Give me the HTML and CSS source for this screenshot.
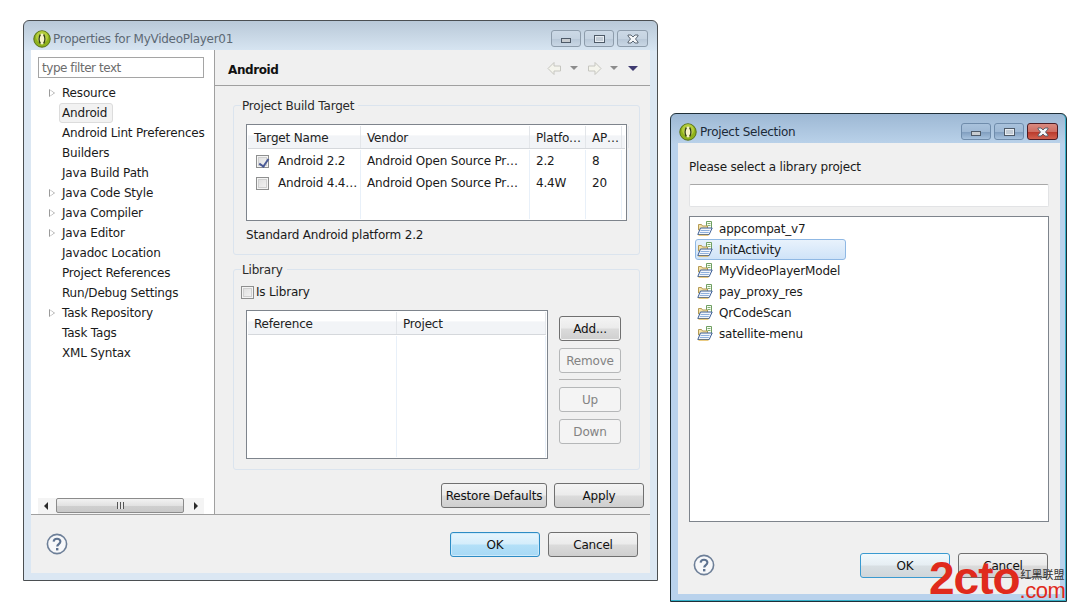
FILE: index.html
```html
<!DOCTYPE html>
<html lang="en">
<head>
<meta charset="utf-8">
<title>Properties and Project Selection</title>
<link rel="stylesheet" href="styles.css">
</head>
<body>
<svg class="defs" width="0" height="0" aria-hidden="true">
  <defs>
    <symbol id="logo" viewBox="0 0 18 18">
      <circle cx="9" cy="9" r="8.2" fill="#8fb21c" stroke="#566f14" stroke-width="1"/>
      <circle cx="9" cy="7" r="6" fill="#c3d94a" opacity=".7"/>
      <ellipse cx="9" cy="9" rx="3.6" ry="5.4" fill="#f7f4c8"/>
      <path d="M7.400 4.500C5.600 7 5.600 11 7.400 13.500M10.600 4.500C12.400 7 12.400 11 10.600 13.500" fill="none" stroke="#2f3d10" stroke-width="1.300"/>
    </symbol>
    <symbol id="help" viewBox="0 0 22 22">
      <circle cx="11" cy="11" r="9.600" fill="#f7f8fa" stroke="#6d7f98" stroke-width="1.600"/>
      <path d="M7.600 8.600C7.800 6.600 9.200 5.700 11 5.700c2 0 3.400 1.100 3.400 2.800 0 2.500-3.200 2.600-3.200 5" fill="none" stroke="#5d7290" stroke-width="2.100"/>
      <rect x="10" y="15" width="2.400" height="2.400" fill="#5d7290"/>
    </symbol>
    <symbol id="folder" viewBox="0 0 16 15">
      <path d="M9.500.5h5v7h-5z" fill="#fbfdf6" stroke="#6f9f62"/>
      <path d="M10.500 2.500h3M10.500 4.500h3" stroke="#7fb06f"/>
      <path d="M1.500 3.500h3l1 1.500h5v4h-9z" fill="#f6e3a6" stroke="#b49a55"/>
      <path d="M.8 13.500l2.700-6.500h11.700l-3 6.500z" fill="#f3f6fb" stroke="#3e5f96"/>
      <path d="M3.500 9.500h9M2.800 11.500h9" stroke="#8fb0dc"/>
      <path d="M1.500 14.200h10" stroke="#e2b64c"/>
    </symbol>
    <symbol id="nav-left" viewBox="0 0 15 15">
      <path d="M7 1.500 1 7.500l6 6v-3.500h6.500v-5H7z" fill="#f4f4ec" stroke="#c6c6c0"/>
    </symbol>
    <symbol id="nav-right" viewBox="0 0 15 15">
      <path d="M8 1.500l6 6-6 6v-3.500H1.500v-5H8z" fill="#f4f4ec" stroke="#c6c6c0"/>
    </symbol>
    <symbol id="close-x" viewBox="0 0 14 10">
      <path d="M2 1h3l2 2 2-2h3v1L9.500 5 12 8v1H9L7 7 5 9H2V8l2.500-3L2 2z" fill="#f4f6f8" stroke="#4e5a68" stroke-width=".9"/>
    </symbol>
  </defs>
</svg>

<section class="window win-properties">
  <header class="titlebar">
    <svg class="title-icon"><use href="#logo"/></svg>
    <span class="title-text">Properties for MyVideoPlayer01</span>
    <div class="caption-buttons">
      <span class="cap"><i class="cap-min"></i></span>
      <span class="cap"><i class="cap-max"></i></span>
      <span class="cap"><svg class="cap-x"><use href="#close-x"/></svg></span>
    </div>
  </header>
  <div class="client">
    <div class="main">
      <aside class="sidebar">
        <div class="filter">type filter text</div>
        <ul class="tree">
          <li class="node"><i class="twisty"></i><span>Resource</span></li>
          <li class="node is-current"><span>Android</span></li>
          <li class="node"><span>Android Lint Preferences</span></li>
          <li class="node"><span>Builders</span></li>
          <li class="node"><span>Java Build Path</span></li>
          <li class="node"><i class="twisty"></i><span>Java Code Style</span></li>
          <li class="node"><i class="twisty"></i><span>Java Compiler</span></li>
          <li class="node"><i class="twisty"></i><span>Java Editor</span></li>
          <li class="node"><span>Javadoc Location</span></li>
          <li class="node"><span>Project References</span></li>
          <li class="node"><span>Run/Debug Settings</span></li>
          <li class="node"><i class="twisty"></i><span>Task Repository</span></li>
          <li class="node"><span>Task Tags</span></li>
          <li class="node"><span>XML Syntax</span></li>
        </ul>
        <div class="hscroll">
          <i class="arrow-left"></i>
          <div class="thumb"><b></b></div>
          <i class="arrow-right"></i>
        </div>
      </aside>
      <div class="pane">
        <div class="pane-head">
          <h1>Android</h1>
          <div class="nav-tools">
            <svg class="nav-icon"><use href="#nav-left"/></svg>
            <i class="tri"></i>
            <svg class="nav-icon nav-second"><use href="#nav-right"/></svg>
            <i class="tri"></i>
            <i class="tri tri-menu"></i>
          </div>
        </div>
        <div class="pane-body">
          <section class="group group-target">
            <div class="legend">Project Build Target</div>
            <div class="table table-target">
              <div class="thead">
                <span>Target Name</span><span>Vendor</span><span>Platfo…</span><span>AP…</span><span></span>
              </div>
              <div class="trow">
                <span><i class="check is-on"></i>Android 2.2</span><span>Android Open Source Pr…</span><span>2.2</span><span>8</span><span></span>
              </div>
              <div class="trow">
                <span><i class="check"></i>Android 4.4…</span><span>Android Open Source Pr…</span><span>4.4W</span><span>20</span><span></span>
              </div>
              <div class="trow trow-fill">
                <span></span><span></span><span></span><span></span><span></span>
              </div>
            </div>
            <p class="target-note">Standard Android platform 2.2</p>
          </section>
          <section class="group group-library">
            <div class="legend">Library</div>
            <label class="is-library"><i class="check"></i>Is Library</label>
            <div class="library-row">
              <div class="table table-library">
                <div class="thead"><span>Reference</span><span>Project</span></div>
                <div class="trow trow-fill"><span></span><span></span></div>
              </div>
              <div class="side-buttons">
                <button class="btn btn-add">Add...</button>
                <button class="btn" disabled>Remove</button>
                <hr class="side-sep">
                <button class="btn" disabled>Up</button>
                <button class="btn" disabled>Down</button>
              </div>
            </div>
          </section>
          <div class="pane-actions">
            <button class="btn btn-restore">Restore Defaults</button>
            <button class="btn btn-apply">Apply</button>
          </div>
        </div>
      </div>
    </div>
    <footer class="footer">
      <svg class="help"><use href="#help"/></svg>
      <div class="footer-buttons">
        <button class="btn btn-wide btn-default">OK</button>
        <button class="btn btn-wide">Cancel</button>
      </div>
    </footer>
  </div>
</section>

<section class="window win-selection">
  <header class="titlebar">
    <svg class="title-icon"><use href="#logo"/></svg>
    <span class="title-text">Project Selection</span>
    <div class="caption-buttons">
      <span class="cap"><i class="cap-min"></i></span>
      <span class="cap"><i class="cap-max"></i></span>
      <span class="cap cap-close"><svg class="cap-x"><use href="#close-x"/></svg></span>
    </div>
  </header>
  <div class="client client-selection">
    <p class="prompt">Please select a library project</p>
    <div class="search"></div>
    <ul class="project-list">
      <li><svg class="folder"><use href="#folder"/></svg><span>appcompat_v7</span></li>
      <li class="is-selected"><svg class="folder"><use href="#folder"/></svg><span>InitActivity</span></li>
      <li><svg class="folder"><use href="#folder"/></svg><span>MyVideoPlayerModel</span></li>
      <li><svg class="folder"><use href="#folder"/></svg><span>pay_proxy_res</span></li>
      <li><svg class="folder"><use href="#folder"/></svg><span>QrCodeScan</span></li>
      <li><svg class="folder"><use href="#folder"/></svg><span>satellite-menu</span></li>
    </ul>
    <footer class="footer footer-selection">
      <svg class="help"><use href="#help"/></svg>
      <div class="footer-buttons">
        <button class="btn btn-wide btn-default btn-soft">OK</button>
        <button class="btn btn-wide">Cancel</button>
      </div>
    </footer>
  </div>
</section>

<div class="watermark">
  <span class="wm-big">2cto</span>
  <span class="wm-side"><span class="wm-cn">红黑联盟</span><span class="wm-com">.com</span></span>
</div>
</body>
</html>
```
FILE: styles.css
```css
* { box-sizing: border-box; }
html, body { margin: 0; padding: 0; }
body {
  position: relative;
  width: 1067px;
  height: 606px;
  overflow: hidden;
  background: #fff;
  font: 12px/16px "DejaVu Sans", sans-serif;
  letter-spacing: -.18px;
  color: #1a1a1a;
}
ul { list-style: none; margin: 0; padding: 0; }
p, h1, hr { margin: 0; }
i { display: block; }
.defs { position: absolute; }

/* Windows */
.window {
  position: absolute;
  display: flex;
  flex-direction: column;
  border: 1px solid #4b4f52;
  border-radius: 6px 6px 0 0;
  padding: 0 7px 7px;
  background: #dbe7f3;
}
.win-properties {
  left: 23px; top: 20px; width: 635px; height: 561px;
  background: linear-gradient(#b9c9d8 0, #d6e4f1 29px, #dbe7f3 30px);
}
.win-selection {
  left: 670px; top: 113px; width: 397px; height: 489px;
  background: linear-gradient(#9db8d4 0, #b9d1e9 29px, #b9d2ec 30px);
  border-color: #1f2f38;
  box-shadow: inset 0 -1px 0 #35b0c8, inset -1px 0 0 #35b0c8;
}
.titlebar {
  display: flex;
  align-items: center;
  height: 29px;
  padding-top: 6px;
  flex: none;
}
.title-icon { width: 18px; height: 18px; margin: 0 2px 0 2px; flex: none; }
.title-text { color: #5d6975; letter-spacing: -.28px; }
.win-selection .title-text { color: #1c2a38; }
.win-selection .title-icon { margin-right: 3px; margin-left: 1px; }
.caption-buttons {
  margin-left: auto;
  display: flex;
  gap: 3px;
  align-self: flex-start;
  margin-top: 3px;
  margin-right: 2px;
}
.win-selection .caption-buttons { margin-right: 1px; }
.cap {
  display: flex; align-items: center; justify-content: center;
  width: 30px; height: 17px;
  border: 1px solid #8d9cab;
  border-radius: 3px;
  background: linear-gradient(#ccd9e6 0, #c5d3e1 50%, #b7c7d7 52%, #c9d7e5 100%);
}
.cap:last-child { width: 31px; }
.win-selection .cap {
  border-color: #6f8cab;
  background: linear-gradient(#a9c2dc 0, #9fb9d5 50%, #7e9cbd 52%, #a7c2de 100%);
}
.win-selection .cap-close {
  border-color: #4c1c24;
  background: linear-gradient(#d98a80 0, #cf6f63 50%, #b8382a 52%, #d1604e 100%);
}
.cap-min { width: 10px; height: 5px; margin-top: 3px; background: #c8ccd0; border: 1px solid #4e5a68; }
.cap-max { width: 11px; height: 8px; background: #c2ccd6; border: 1px solid #4e5a68; box-shadow: inset 0 0 0 1px #e8edf2; }
.cap-x { width: 14px; height: 10px; }

.client {
  flex: 1;
  display: flex;
  flex-direction: column;
  background: #f0f0f0;
  min-height: 0;
}

/* Properties dialog */
.main {
  display: flex;
  height: 465px;
  flex: none;
  border-bottom: 1px solid #a0a0a0;
}
.sidebar {
  width: 184px;
  flex: none;
  display: flex;
  flex-direction: column;
  padding: 7px 10px 0 7px;
  background: #fff;
  border-right: 1px solid #a0a0a0;
  position: relative;
}
.filter {
  height: 21px;
  padding: 2px 3px;
  border: 1px solid #a5a5a5;
  color: #6d6d6d;
  line-height: 16px;
  letter-spacing: -.45px;
}
.tree { margin-top: 5px; flex: 1; }
.node {
  display: flex;
  align-items: center;
  height: 20px;
  padding-left: 24px;
  position: relative;
}
.node span { white-space: nowrap; }
.twisty {
  position: absolute; left: 11px; top: 6px;
  width: 0; height: 0;
  border-style: solid;
  border-width: 4px 0 4px 6px;
  border-color: transparent transparent transparent #9a9a9a;
}
.twisty::after {
  content: ""; position: absolute; left: -5px; top: -3px;
  border-style: solid; border-width: 3px 0 3px 4px;
  border-color: transparent transparent transparent #fff;
}
.is-current span {
  margin-left: -3px;
  padding: 1px 3px 1px 2px;
  height: 20px;
  width: 54px;
  border: 1px solid #dcdcdc;
  border-radius: 3px;
  background: #f2f2f2;
  line-height: 16px;
}
.hscroll {
  display: flex;
  align-items: flex-start;
  height: 16px;
  background: #f4f4f4;
  padding: 0 5px;
}
.arrow-left, .arrow-right { width: 0; height: 0; border-style: solid; margin-top: 4px; }
.arrow-left { border-width: 4px 4px 4px 0; border-color: transparent #2c2c2c transparent transparent; margin-left: 1px; }
.arrow-right { border-width: 4px 0 4px 4px; border-color: transparent transparent transparent #2c2c2c; margin-left: 10px; }
.thumb {
  width: 128px; height: 15px;
  margin-left: 8px;
  display: flex; align-items: center; justify-content: center;
  border: 1px solid #8b8b8b;
  border-radius: 2px;
  background: linear-gradient(#f2f2f2 0, #e2e2e2 50%, #cfcfcf 52%, #c9c9c9 100%);
}
.thumb b { width: 7px; height: 7px; background: repeating-linear-gradient(90deg, #555 0 1px, #e8e8e8 1px 3px); }

.pane { flex: 1; display: flex; flex-direction: column; min-width: 0; }
.pane-head {
  height: 36px;
  flex: none;
  display: flex;
  align-items: center;
  padding: 5px 12px 0 13px;
  border-bottom: 1px solid #a0a0a0;
}
.pane-head h1 { font-size: 12px; font-weight: bold; color: #111; letter-spacing: -.4px; }
.nav-tools { margin-left: auto; display: flex; align-items: center; margin-top: -4px; }
.nav-icon { width: 15px; height: 15px; }
.nav-second { margin-left: 9px; }
.tri {
  width: 0; height: 0; margin-left: 8px;
  border-style: solid; border-width: 4px 4px 0;
  border-color: #8c8c8c transparent transparent;
}
.tri-menu { margin-left: 10px; border-width: 5px 5px 0; border-top-color: #3e3a70; }

.pane-body {
  flex: 1;
  padding: 19px 6px 0 18px;
  display: flex;
  flex-direction: column;
}
.group {
  width: 407px;
  border: 1px solid #dbe4ee;
  border-radius: 3px;
  padding: 0 11px 0 12px;
}
.group-target { height: 150px; }
.group-library { height: 201px; margin-top: 14px; }
.legend {
  display: table;
  height: 16px;
  margin: -8px 0 0 -5px;
  padding: 0 4px 0 1px;
  background: #f0f0f0;
  color: #2a2a2a;
}
.table {
  background: #fff;
  border: 1px solid #7e848c;
  display: flex;
  flex-direction: column;
  padding: 1px;
}
.table-target { width: 381px; height: 97px; margin-top: 10px; }
.thead, .trow { display: grid; }
.table-target .thead, .table-target .trow { grid-template-columns: 113px 169px 56px 36px 1fr; }
.table-library .thead, .table-library .trow { grid-template-columns: 149px 1fr; }
.thead {
  height: 23px;
  margin-bottom: 1px;
  flex: none;
  background: linear-gradient(#fff 0, #fff 40%, #f2f4f7 45%, #f2f4f7 100%);
  border-bottom: 1px solid #d5d8dc;
}
.thead span {
  display: block;
  padding: 4px 0 0 6px;
  border-right: 1px solid #e3e6ea;
  white-space: nowrap;
  overflow: hidden;
  color: #222;
}
.trow { height: 22px; }
.trow span {
  display: flex;
  align-items: center;
  padding-left: 6px;
  white-space: nowrap;
  border-right: 1px solid #e8f0f9;
}
.table-target .trow:nth-child(2) span:first-child,
.table-target .trow:nth-child(3) span:first-child { padding-left: 8px; }
.trow-fill { flex: 1; }
.check {
  width: 13px; height: 13px; flex: none;
  margin-right: 9px;
  border: 1px solid #8e8f8f;
  background: linear-gradient(135deg, #dcdcdc, #f6f6f6);
  box-shadow: inset 0 0 0 1px #f4f4f4, inset 0 0 0 2px #d0d0d0;
  position: relative;
}
.is-on::after {
  content: ""; position: absolute; left: 4px; top: 1px;
  width: 4px; height: 8px;
  border: solid #4a5a96; border-width: 0 2px 2px 0;
  transform: rotate(35deg);
}
.target-note { margin-top: 6px; }
.is-library { display: flex; align-items: center; height: 16px; margin: 6px 0 0 -5px; }
.is-library .check { margin-right: 2px; }
.library-row { display: flex; margin-top: 10px; }
.table-library { width: 302px; height: 149px; }
.side-buttons { margin: 6px 0 0 11px; width: 62px; display: flex; flex-direction: column; gap: 7px; }
.side-sep { width: 62px; border: 0; border-top: 1px solid #b4b4b4; margin: -1px 0 0; height: 0; }

.btn {
  height: 25px;
  padding: 0;
  border: 1px solid #707070;
  border-radius: 3px;
  background: linear-gradient(#f4f4f4 0, #ebebeb 48%, #dbdbdb 52%, #cfcfcf 100%);
  font: 12px/16px "DejaVu Sans", sans-serif;
  letter-spacing: -.18px;
  color: #111;
}
.btn:disabled { border-color: #b5b7b8; background: #f4f4f4; color: #838383; }
.btn-add { box-shadow: inset 0 0 0 1px #f4f4f4; }
.pane-actions {
  display: flex;
  justify-content: flex-end;
  gap: 7px;
  margin-top: 13px;
}
.btn-restore { width: 106px; }
.btn-apply { width: 90px; }
.footer {
  flex: 1;
  display: flex;
  align-items: flex-start;
  justify-content: space-between;
  padding: 17px 12px 0 15px;
}
.help { width: 22px; height: 22px; margin-top: 1px; flex: none; }
.footer-buttons { display: flex; gap: 8px; }
.btn-wide { width: 90px; }
.btn-default {
  border-color: #2d8cc4;
  background: linear-gradient(#e6f5fd 0, #d4edfb 48%, #b3e0f8 52%, #a8d9f5 100%);
  box-shadow: inset 0 0 0 1px #cdeafb;
}
.btn-soft {
  border-color: #3a9ad0;
  background: linear-gradient(#f1f9fd 0, #e6eef3 48%, #d8dfe3 52%, #d0d6da 100%);
  box-shadow: none;
}

/* Project selection dialog */
.client-selection { padding: 0 11px; width: 382px; }
.prompt { margin-top: 16px; height: 16px; }
.search {
  height: 23px;
  margin-top: 9px;
  background: #fff;
  border: 1px solid #e2e3e5;
  border-top-color: #a8a8a8;
  border-radius: 2px;
}
.project-list {
  height: 306px;
  margin-top: 9px;
  padding: 1px 5px;
  background: #fff;
  border: 1px solid #7e848c;
}
.project-list li {
  display: flex;
  align-items: center;
  height: 21px;
  padding-left: 1px;
  border: 1px solid transparent;
  border-radius: 3px;
  width: 151px;
  white-space: nowrap;
}
.project-list li.is-selected {
  border-color: #8fb8e4;
  background: linear-gradient(#e8f2fc, #cfe3f8);
}
.folder { width: 16px; height: 15px; margin-right: 6px; flex: none; }
.footer-selection { padding: 31px 1px 0 4px; }

/* Watermark */
.watermark {
  position: absolute;
  left: 929px; top: 555px;
  display: flex;
  align-items: flex-end;
  color: #e02a1c;
  pointer-events: none;
}
.wm-big {
  font: bold 46px/46px "Liberation Sans", sans-serif;
  letter-spacing: -1px;
  color: #e02a1c;
}
.wm-side { display: flex; flex-direction: column; margin-left: 0; }
.wm-cn { font: 11px/13px "Noto Sans CJK SC", sans-serif; letter-spacing: 0; color: #333; margin: 0 0 -1px 1px; }
.wm-com { font: 22px/21px "Liberation Sans", sans-serif; letter-spacing: -.5px; color: #e02a1c; }
```
